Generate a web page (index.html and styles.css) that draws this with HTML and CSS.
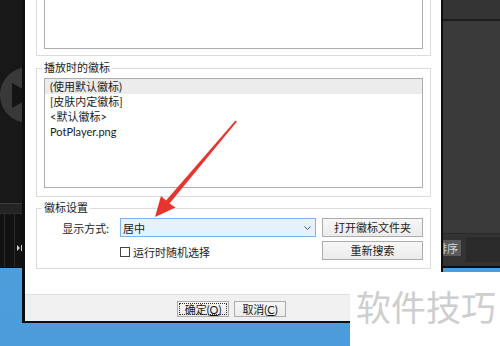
FILE: index.html
```html
<!DOCTYPE html>
<html>
<head>
<meta charset="utf-8">
<link rel="stylesheet" href="styles.css">
</head>
<body>
<div class="desktop">
  <div class="player">
    <div class="video">
      <div class="screen">
        <svg class="logo" width="56" height="56" viewBox="0 0 56 56"><circle cx="28" cy="28" r="28" fill="#393939"/><polygon points="12,16 12,41 34,28.5" fill="#141414"/></svg>
      </div>
      <div class="seekbar"></div>
      <div class="controls">
        <span class="ctl c1"></span><span class="ctl c2"></span><span class="ctl c3"><svg width="5" height="6" viewBox="0 0 5 6"><polygon points="0,0 3,3 0,6" fill="#cfcfcf"/><rect x="4" y="0" width="1" height="6" fill="#cfcfcf"/></svg></span>
      </div>
    </div>
    <div class="playlist">
      <div class="pl-head"></div>
      <div class="pl-body"></div>
      <div class="pl-tools"><span class="sort">排序</span><span class="pl-search"></span></div>
    </div>
  </div>

  <div class="dialog">
    <div class="dlg-body">
      <div class="group group-top"><div class="listbox list-top"></div></div>
      <fieldset class="group">
        <legend>播放时的徽标</legend>
        <ul class="listbox list-logos">
          <li class="sel">(使用默认徽标)</li>
          <li>[皮肤内定徽标]</li>
          <li>&lt;默认徽标&gt;</li>
          <li>PotPlayer.png</li>
        </ul>
      </fieldset>
      <fieldset class="group">
        <legend>徽标设置</legend>
        <div class="row">
          <span class="lbl">显示方式:</span>
          <div class="combo"><span class="combo-text">居中</span><svg class="chev" width="7" height="4" viewBox="0 0 7 4"><polyline points="0.5,0.5 3.5,3.5 6.5,0.5" fill="none" stroke="#555" stroke-width="1"/></svg></div>
          <button class="btn wide">打开徽标文件夹</button>
        </div>
        <div class="row row2">
          <label class="check"><span class="box"></span><span>运行时随机选择</span></label>
          <button class="btn wide">重新搜索</button>
        </div>
      </fieldset>
    </div>
    <div class="dlg-foot">
      <button class="btn small focus"><span class="focus-ring">确定(<u>O</u>)</span></button>
      <button class="btn small"><span class="focus-ring plain">取消(<u>C</u>)</span></button>
    </div>
  </div>

  <svg class="arrow" width="500" height="346" viewBox="0 0 500 346"><polygon points="155,217 161,196 166,200.5 235.5,120.5 237,121.5 169.5,203.5 175.5,207.5" fill="#e8342d"/></svg>

  <div class="watermark">软件技巧</div>
</div>
</body>
</html>
```

FILE: styles.css
```css
* { box-sizing: border-box; }
html, body { margin: 0; padding: 0; }
body {
  width: 500px;
  height: 346px;
  overflow: hidden;
  font-family: "Lato", "Noto Sans CJK SC", sans-serif;
  font-size: 11px;
  color: #1b1b1b;
}
.desktop {
  position: relative;
  width: 500px;
  height: 346px;
  overflow: hidden;
  background: linear-gradient(180deg, #55a4df 0%, #4c9cdb 100%);
}

/* background player window */
.player {
  position: absolute;
  left: 0;
  top: 0;
  width: 500px;
  height: 268px;
  display: flex;
  background: #111;
}
.video { flex: 1; display: flex; flex-direction: column; }
.screen { flex: 1; position: relative; background: #181818; overflow: hidden; }
.logo { position: absolute; left: 0; top: 67px; }
.seekbar {
  height: 11px;
  background: #242424;
  border-top: 1px solid #3b3b3b;
  border-bottom: 1px solid #2e2e2e;
}
.controls { height: 54px; display: flex; background: #121212; border-bottom: 1px solid #0a0a0a; }
.ctl { display: block; border-right: 1px solid #2c2c2c; }
.c1 { width: 5px; }
.c2 { width: 10px; }
.c3 { width: 20px; border-right: 0; padding: 31px 0 0 2px; }
.c3 svg { display: block; }

.playlist { width: 120px; display: flex; flex-direction: column; }
.pl-head { height: 21px; background: #343434; border-bottom: 2px solid #1c1c1c; }
.pl-body { flex: 1; background: #3a3a3a; }
.pl-tools {
  height: 35px;
  background: #333;
  border-top: 1px solid #282828;
  border-bottom: 2px solid #0d0d0d;
  display: flex;
  align-items: flex-start;
  padding-top: 6px;
}
.sort {
  margin-left: 53px;
  height: 16px;
  line-height: 16px;
  padding: 0 3px;
  background: #5a5a5a;
  color: #d6d6d6;
  font-family: "Noto Sans CJK SC", sans-serif;
  font-size: 11px;
}
.pl-search {
  margin: -3px 0 0 5px;
  flex: 1;
  height: 25px;
  background: #2a2a2a;
}

/* dialog */
.dialog {
  position: absolute;
  left: 22px;
  top: 0;
  width: 421px;
  height: 323px;
  border-style: solid;
  border-color: #0e0e0e;
  border-width: 0 2px 2px 3px;
  display: flex;
  flex-direction: column;
  background: #fff;
}
.dlg-body {
  flex: 1;
  background: #fff;
  padding: 0 10px 0 11px;
  display: flex;
  flex-direction: column;
}
.group {
  border: 1px solid #dcdcdc;
  margin: 0;
  min-width: 0;
}
.group-top {
  height: 56px;
  border-top: 0;
  padding: 0 7px 6px;
}
.listbox {
  border: 1px solid #abadb3;
  background: #fff;
  margin: 0;
  padding: 0;
  list-style: none;
}
.list-top { height: 49px; border-top: 0; }

fieldset.group { padding: 4px 7px 8px; }
fieldset.group + fieldset.group { margin-top: 5px; }
.group-top + fieldset.group { margin-top: 6px; }
legend {
  padding: 0 2px;
  margin-left: -2px;
  font-size: 11px;
  line-height: 12px;
  color: #1b1b1b;
}
.list-logos { height: 110px; }
.list-logos li {
  height: 15px;
  line-height: 15px;
  padding-left: 5px;
  white-space: nowrap;
}
.list-logos li.sel { background: #ececec; }

.row { display: flex; align-items: center; height: 19px; }
.row2 { margin-top: 4px; }
.lbl {
  width: 76px;
  padding-right: 11px;
  text-align: right;
  white-space: nowrap;
}
.combo {
  width: 196px;
  height: 19px;
  border: 1px solid #7eb4ea;
  background: #e5f1fb;
  display: flex;
  align-items: center;
  padding-left: 2px;
}
.combo-text { flex: 1; }
.chev { margin-right: 4px; display: block; }
.btn {
  font-family: inherit;
  font-size: 11px;
  color: #1b1b1b;
  border: 1px solid #acacac;
  background: linear-gradient(180deg, #f7f7f7 0%, #ebebeb 100%);
  padding: 0;
  margin: 0;
  line-height: 1;
  display: flex;
  align-items: center;
  justify-content: center;
}
.wide { width: 101px; height: 19px; margin-left: auto; }
.check {
  margin-left: 76px;
  display: flex;
  align-items: center;
  padding-top: 2px;
}
.box {
  width: 10px;
  height: 10px;
  border: 1px solid #444;
  background: #fff;
  margin-right: 3px;
}

.dlg-foot {
  height: 27px;
  background: #f0f0f0;
  border-top: 1px solid #dfdfdf;
  display: flex;
  align-items: flex-start;
  padding: 6px 0 0 152px;
  gap: 5px;
}
.small { width: 52px; height: 16px; padding: 1px; }
.focus-ring {
  flex: 1;
  align-self: stretch;
  display: flex;
  align-items: center;
  justify-content: center;
  border: 1px dotted transparent;
}
.focus .focus-ring { border-color: #333; }
u { text-decoration: underline; text-underline-offset: 1px; }

.arrow { position: absolute; left: 0; top: 0; pointer-events: none; }

.watermark {
  position: absolute;
  left: 350px;
  top: 272px;
  width: 150px;
  height: 74px;
  background: #fff;
  color: #cecece;
  font-family: "Noto Sans CJK SC", sans-serif;
  font-size: 35px;
  line-height: 40px;
  padding: 14px 0 0 6px;
  white-space: nowrap;
}
```
